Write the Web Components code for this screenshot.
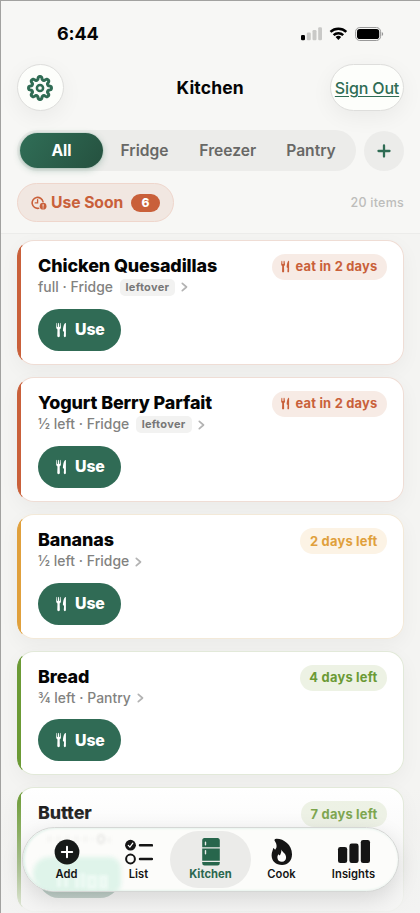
<!DOCTYPE html>
<html lang="en">
<head>
<meta charset="utf-8">
<title>Kitchen</title>
<style>
html,body{margin:0;height:100%;overflow:hidden}
body{font-family:Inter,"Liberation Sans",sans-serif;color:#050505;-webkit-font-smoothing:antialiased}
</style>
</head>
<body>
<kitchen-app></kitchen-app>
<script>
const ICONS = {
  gear: `<svg viewBox="0 0 26 26" width="26" height="26" fill="none" stroke="#2f6c54" stroke-width="3" stroke-linejoin="round"><path d="GEAR"/><circle cx="13" cy="13" r="3.1" stroke-width="2.5"/></svg>`,
  fork: `<svg viewBox="0 0 12 16" width="12" height="16" style="width:100%;height:100%;display:block" fill="currentColor"><path d="M.5.6Q.5.2.8.2T1.2.6L1.4 4.6H2.1L2.3.6Q2.3.2 2.75.2T3.2.6L3.4 4.6H4.1L4.3.6Q4.4.2 4.7.2T5 .6L5.4 5Q5.5 6.7 4 7.5L4.2 14.6Q4.2 15.8 2.8 15.8T1.4 14.6L1.6 7.5Q.1 6.7.2 5Z"/><path d="M10.8.9V14.6Q10.8 15.8 9.7 15.8T8.5 14.6L8.8 9.9Q7.4 9.6 7.5 8.6C7.7 5.3 8.5 1.8 10 .4Q10.8-.1 10.8.9Z"/></svg>`,
  chev: `<svg viewBox="0 0 7 10" width="7" height="10" fill="none" stroke="#b3b3b3" stroke-width="1.7" stroke-linecap="round" stroke-linejoin="round"><path d="M1.3 1.3 5.5 5 1.3 8.7"/></svg>`,
  clock: `<svg viewBox="0 0 16 14" width="16" height="14" fill="none" stroke="#c9603a" stroke-width="1.6" stroke-linecap="round"><path d="M7.6 12.3A5.5 5.5 0 1 1 12 5.6"/><path d="M6.6 3.6V6.9H4.2" stroke-width="1.3"/><circle cx="12.1" cy="10.2" r="3.4" fill="#c9603a" stroke="none"/><path d="M12.1 8.5V10.3M12.1 11.8V11.9" stroke="#f2e4dd" stroke-width="1.1"/></svg>`,
  add: `<svg viewBox="0 0 26 26" width="26" height="26"><circle cx="13" cy="13" r="12.4" fill="#171a19"/><path d="M13 7.8V18.2M7.8 13H18.2" stroke="#fff" stroke-width="2" stroke-linecap="round"/></svg>`,
  list: `<svg viewBox="0 0 28 26" width="28" height="26" fill="none" stroke="#151515" stroke-linecap="round"><circle cx="5.5" cy="6.2" r="5.4" fill="#151515" stroke="none"/><path d="M3.3 6.4 4.9 8.1 7.8 4.2" stroke="#fff" stroke-width="1.3"/><circle cx="5.5" cy="20" r="4.4" stroke-width="2"/><path d="M15 6.3H27M15 20H27" stroke-width="2.5"/></svg>`,
  fridge: `<svg viewBox="0 0 20 28" width="20" height="28"><path d="M3.5 0H16.5Q18.8 0 18.8 2.6V9.3H1.2V2.6Q1.2 0 3.5 0ZM1.2 10.6H18.8V22.7H1.2ZM1.2 24H18.8V25Q18.8 27.5 16.5 27.5H3.5Q1.2 27.5 1.2 25Z" fill="#27664c"/><path d="M4.5 4.2V6.8M4.5 12.6V15.8" stroke="#e9ebe8" stroke-width="1.4" stroke-linecap="round"/></svg>`,
  flame: `<svg viewBox="0 0 22 28" width="22" height="28"><path d="M5.3.8C12 .4 21 6.4 21 16.2C21 22.7 17 27 11.1 27C4.8 27 .6 23 .6 17.2C.6 13.8 2.1 12 2.2 9.9C3 10.2 3.6 11 4.1 11.7C5.8 10.5 6.5 7.1 3.8 3.1C2.9 1.8 3.8.8 5.3.8Z" fill="#151515"/><path d="M10.4 11.4C11.2 14.1 15.1 15.4 15.1 19.2C15.1 22 13.4 23.7 10.9 23.7C8.3 23.7 6.4 22 6.4 19.4C6.4 17.8 7.1 16.9 7.4 16.3Q8.2 17.2 8.8 17.6C9.8 15.7 10.5 13.9 10.4 11.4Z" fill="#fff"/></svg>`,
  bars: `<svg viewBox="0 0 34 26" width="34" height="26" fill="#151515"><rect x="1" y="8" width="9.2" height="16" rx="2.3"/><rect x="12.4" y="4.6" width="9.2" height="19.4" rx="2.3"/><rect x="23.8" y="1" width="9.2" height="23" rx="2.3"/></svg>`
};
/* Outline of an eight-toothed gear as a smooth polar curve */
(() => {
  let d = "";
  for (let i = 0; i < 128; i++) {
    const a = i / 128 * Math.PI * 2, w = Math.cos(8 * a);
    const r = 9.9 + 1.55 * Math.tanh(1.8 * w) / Math.tanh(1.8);
    d += (i ? "L" : "M") + (13 + r * Math.sin(a)).toFixed(2) + " " + (13 - r * Math.cos(a)).toFixed(2);
  }
  ICONS.gear = ICONS.gear.replace("GEAR", d + "Z");
})();

function define(name, render) {
  customElements.define(name, class extends HTMLElement {
    constructor() { super(); this.attachShadow({ mode: "open" }); }
    connectedCallback() {
      const t = document.createElement("template");
      t.innerHTML = render(this);
      this.shadowRoot.replaceChildren(t.content.cloneNode(true));
    }
  });
}

define("status-bar", () => `
<style>
:host{display:flex;justify-content:space-between;align-items:center;height:22px;padding:22px 36px 0 56px}
b{font-size:18px;font-weight:700;letter-spacing:-.1px;line-height:22px}
svg{display:block}
</style>
<b>6:44</b>
<svg width="84" height="16" viewBox="0 0 84 16"><rect x="1" y="9" width="4" height="5.2" rx="1.2"/><g fill="#c9c9c7"><rect x="6.8" y="6.6" width="4" height="7.6" rx="1.2"/><rect x="12.5" y="4" width="4" height="10.2" rx="1.2"/><rect x="18.2" y="1.3" width="3.8" height="12.9" rx="1.2"/></g>
<g fill="none" stroke="#000" stroke-width="2.5"><path d="M30.5 5.8A11.6 11.6 0 0 1 46.3 5.8"/><path d="M33.6 9.2A7 7 0 0 1 43.2 9.2"/></g><path d="M35.6 11.1A4.2 4.2 0 0 1 41.2 11.1L38.4 14.1Z"/>
<rect x="55.6" y="1.5" width="25" height="13" rx="4.2" fill="none" stroke="#999" stroke-width="1"/><rect x="57" y="3" width="22.2" height="10" rx="2.8"/><path d="M81.8 6Q83.2 6.6 83.2 8T81.8 10Z" fill="#999"/></svg>`);

define("nav-header", () => `
<style>
:host{display:grid;grid-template-columns:74px 1fr 74px;align-items:center;padding:19px 16px 0 15.5px;height:47px}
.b{height:45px;border:1px solid #dededc;background:#fdfefb;border-radius:24px;display:flex;align-items:center;justify-content:center;box-shadow:0 6px 22px rgba(0,0,0,.055)}
.g{width:45px}
h1{margin:0;text-align:center;font-size:17.5px;font-weight:700;letter-spacing:.15px}
a{font-size:16px;font-weight:500;letter-spacing:-.15px;color:#2f6c54;text-decoration:underline;text-decoration-thickness:1px;text-underline-offset:2px;white-space:nowrap}
svg{display:block}
</style>
<div class="b g">${ICONS.gear}</div><h1>Kitchen</h1><div class="b"><a>Sign Out</a></div>`);

define("filter-tabs", () => `
<style>
:host{display:flex;align-items:center;gap:8px;padding:19px 16px 0;height:41px}
.s{display:grid;grid-template-columns:83px 83px 83.5px 83px;height:35px;width:333px;padding:3px;border-radius:21px;background:#ececea}
.s span{display:flex;align-items:center;justify-content:center;font-size:15.6px;font-weight:600;color:#686866}
.s .on{color:#fff;font-weight:700;border-radius:18px;background:linear-gradient(125deg,#306e57,#25513f);box-shadow:0 2px 7px rgba(47,108,84,.3),0 0 0 1px #dce3df}
.p{width:40px;height:40px;border-radius:50%;background:#ececea;display:flex;align-items:center;justify-content:center}
</style>
<div class="s"><span class="on">All</span><span>Fridge</span><span>Freezer</span><span>Pantry</span></div>
<div class="p"><svg width="14" height="14" viewBox="0 0 14 14" stroke="#2f6c54" stroke-width="2.3" stroke-linecap="round"><path d="M7 1.5V12.5M1.5 7H12.5"/></svg></div>`);

define("use-soon", () => `
<style>
:host{display:flex;justify-content:space-between;align-items:center;padding:12px 16px 0 16px;height:39px}
.c{display:flex;align-items:center;box-sizing:border-box;width:157px;height:38.5px;border:1px solid #efd6cc;border-radius:20px;background:#f1e7e1;padding-left:12.5px;color:#c9603a}
svg{display:block}
b{font-size:15.7px;font-weight:700;letter-spacing:-.05px;margin-left:4.5px;white-space:nowrap;flex:0 0 74px}
i{font-style:normal;margin-left:6px;width:29px;height:18px;border-radius:9px;background:#c9603a;color:#fff;font-size:12px;font-weight:800;line-height:18px;text-align:center}
em{font-style:normal;font-size:12.5px;font-weight:500;letter-spacing:.25px;color:#bdbdbb}
</style>
<div class="c">${ICONS.clock}<b>Use Soon</b><i>6</i></div><em>20 items</em>`);

define("food-card", el => {
  const kind = el.getAttribute("kind");
  const [main, pale, edge] = {
    red: ["#c9603a", "#f7ebe5", "#efddd5"], amber: ["#e0a03c", "#fcf3e5", "#f3e9d8"],
    green: ["#6b9a35", "#edf2e4", "#e2e9d9"], last: ["#6b9a35", "#edf2e4", "#e2e9d9"]
  }[kind];
  const tag = el.hasAttribute("leftover"), last = kind === "last";
  return `
<style>
:host{display:block;box-sizing:border-box;height:${tag ? 125.2 : 124.4}px;border:1px solid ${edge};border-left-color:${main};border-radius:17px;background:linear-gradient(90deg,${main} 3px,#fff 3.5px);box-shadow:0 6px 20px rgba(0,0,0,.045);padding:13px 16px 0 20px}
.top{display:flex;justify-content:space-between;align-items:flex-start;height:25px}
h2{margin:0;font-size:17.9px;line-height:24px;font-weight:800;letter-spacing:-.09px;white-space:nowrap}
.badge{box-sizing:border-box;height:26px;padding:0 9.5px;border-radius:13px;background:${pale};color:${main};font-size:12.9px;letter-spacing:.22px;font-weight:700;display:flex;align-items:center;white-space:nowrap}
.badge .f{width:9px;height:13px;margin-right:5px}
.meta{display:flex;align-items:center;height:${tag ? 17.5 : 17}px;font-size:13.9px;font-weight:500;letter-spacing:.04px;line-height:17px;color:#828280;white-space:nowrap}
.tag{font-size:11px;font-weight:700;letter-spacing:.3px;color:#777;background:#f2f2f1;border-radius:5px;line-height:17px;padding:0 6px;margin-left:6.5px}
.meta svg{margin-left:6px}
.use{display:flex;align-items:center;box-sizing:border-box;width:83px;height:42px;margin-top:12.5px;border-radius:21px;background:#306b55;color:#fff;padding-left:18px;font-size:15.8px;font-weight:800;letter-spacing:-.1px;gap:8px}
.use .f{width:11px;height:16px}
</style>
<div class="top"><h2><slot></slot></h2><div class="badge">${kind === "red" ? `<div class="f">${ICONS.fork}</div>` : ""}<slot name="badge"></slot></div></div>
<div class="meta"><slot name="meta"></slot>${tag ? `<span class="tag">leftover</span>` : ""}${last ? "" : ICONS.chev}</div>
<div class="use">${last ? "" : `<div class="f">${ICONS.fork}</div><span>Use</span>`}</div>`;
});

define("tab-item", el => `
<style>
:host{display:flex;flex-direction:column;align-items:center;box-sizing:border-box;height:57px;border-radius:29px;padding-top:7px;color:#111;background:${el.hasAttribute("active") ? "#ebebe9" : "none"}}
.i{height:27px;display:flex;align-items:center;justify-content:center}
svg{display:block}
span{font-size:11.2px;line-height:14px;font-weight:${el.hasAttribute("active") ? 700 : 600};letter-spacing:.05px;margin-top:2px;color:${el.hasAttribute("active") ? "#2a674e" : "#151515"};white-space:nowrap}
</style>
<div class="i">${ICONS[el.getAttribute("icon")]}</div><span><slot></slot></span>`);

define("tab-bar", () => `
<style>
:host{display:block;position:absolute;left:22px;top:827px;width:377px;height:65px;box-sizing:border-box;border:1px solid #d5d7d5;border-radius:33px;overflow:hidden;background:#fcfcfa;box-shadow:0 7px 22px rgba(0,0,0,.13)}
.glow{position:absolute;inset:0;border-radius:32px;box-shadow:inset 1px 0 3px #d2ebe1}
.mint{position:absolute;left:10px;top:29px;width:88px;height:36px;border-radius:24px 17px 13px 28px;background:#dff4ea;filter:blur(2px)}
.ghost{position:absolute;left:0;top:0;filter:blur(1.5px)}
.row{position:relative;display:grid;grid-template-columns:81px 63px 81px 61px 83px;padding:3px 3px}
</style>
<div class="mint"></div><div class="glow"></div>
<svg class="ghost" width="110" height="64" fill="none" stroke="#eefaf4" stroke-width="4"><path d="M36 47V59M43 47V59M54 45V60M60 45V60M66 49V59H72V49ZM78 49V59H83V49Z"/><ellipse cx="78" cy="11" rx="3" ry="4" stroke="#e6e6e4" stroke-width="2"/><path d="M24 11H70M84 12H88" stroke="#f5f5f3" stroke-width="5" stroke-dasharray="5 4"/></svg>
<div class="row"><tab-item icon="add">Add</tab-item><tab-item icon="list">List</tab-item><tab-item icon="fridge" active>Kitchen</tab-item><tab-item icon="flame">Cook</tab-item><tab-item icon="bars">Insights</tab-item></div>`);

define("kitchen-app", () => `
<style>
:host{display:block;position:relative;box-sizing:border-box;width:420px;height:913px;overflow:hidden;background:#f4f4f2;border-top:1px solid #a2a2a0;border-left:1px solid #a2a2a0}
header{position:relative;box-sizing:border-box;height:233px;background:#f7f7f5;border-bottom:1px solid #ececea;z-index:1}
main{display:flex;flex-direction:column;gap:12.1px;padding:5.6px 16px 0 16px}
.fade{position:absolute;left:0;right:0;top:787px;bottom:0;background:linear-gradient(rgba(240,240,239,0),rgba(236,236,235,.25) 35%,rgba(243,243,242,.88) 100%)}
tab-bar{margin:-1px 0 0 -1px}
</style>
<header><status-bar></status-bar><nav-header></nav-header><filter-tabs></filter-tabs><use-soon></use-soon></header>
<main>
<food-card kind="red" leftover>Chicken Quesadillas<span slot="badge">eat in 2 days</span><span slot="meta">full · Fridge</span></food-card>
<food-card kind="red" leftover>Yogurt Berry Parfait<span slot="badge">eat in 2 days</span><span slot="meta">½ left · Fridge</span></food-card>
<food-card kind="amber">Bananas<span slot="badge">2 days left</span><span slot="meta">½ left · Fridge</span></food-card>
<food-card kind="green">Bread<span slot="badge">4 days left</span><span slot="meta">¾ left · Pantry</span></food-card>
<food-card kind="last">Butter<span slot="badge">7 days left</span></food-card>
</main>
<div class="fade"></div>
<tab-bar></tab-bar>`);
</script>
</body>
</html>
